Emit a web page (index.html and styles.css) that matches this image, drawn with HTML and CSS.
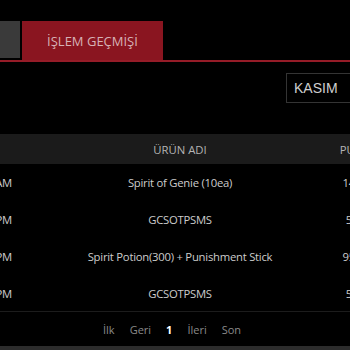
FILE: index.html
```html
<!DOCTYPE html>
<html lang="tr">
<head>
<meta charset="utf-8">
<link rel="stylesheet" href="styles.css">
</head>
<body>
<div class="screen">
  <div class="tabs">
    <div class="tab tab-gray"></div>
    <div class="tab tab-active">İŞLEM GEÇMİŞİ</div>
  </div>
  <div class="filter">
    <div class="select">KASIM</div>
  </div>
  <div class="table">
    <div class="row head">
      <div class="c-date head-date">TARİH</div>
      <div class="c-name">ÜRÜN ADI</div>
      <div class="c-pts">PUAN</div>
    </div>
    <div class="row">
      <div class="c-date">11/14/2023 9:45:12 AM</div>
      <div class="c-name">Spirit of Genie (10ea)</div>
      <div class="c-pts">1400</div>
    </div>
    <div class="row">
      <div class="c-date">11/12/2023 8:21:40 PM</div>
      <div class="c-name">GCSOTPSMS</div>
      <div class="c-pts">500</div>
    </div>
    <div class="row">
      <div class="c-date">11/09/2023 7:02:18 PM</div>
      <div class="c-name">Spirit Potion(300) + Punishment Stick</div>
      <div class="c-pts">9500</div>
    </div>
    <div class="row last">
      <div class="c-date">11/03/2023 6:33:51 PM</div>
      <div class="c-name">GCSOTPSMS</div>
      <div class="c-pts">500</div>
    </div>
  </div>
  <div class="pager">
    <span class="pg">İlk</span>
    <span class="pg">Geri</span>
    <span class="pg current">1</span>
    <span class="pg">İleri</span>
    <span class="pg">Son</span>
  </div>
  <div class="footer"></div>
</div>
</body>
</html>
```
FILE: styles.css
```css
html, body {
  margin: 0;
  padding: 0;
  background: #000;
}
body {
  width: 350px;
  height: 350px;
  overflow: hidden;
  font-family: "Open Sans", "Liberation Sans", sans-serif;
}
.screen {
  width: 350px;
  height: 350px;
  overflow: hidden;
  display: flex;
  flex-direction: column;
}
.tabs {
  display: flex;
  align-items: flex-start;
  gap: 2px;
  padding-top: 21px;
  border-bottom: 2px solid #961c28;
}
.tab {
  font-size: 13px;
  display: flex;
  align-items: center;
  justify-content: center;
  white-space: nowrap;
}
.tab-gray {
  width: 20px;
  height: 37px;
  background: #3a3a3a;
}
.tab-active {
  width: 141px;
  height: 39px;
  background: #8a1520;
  color: #d6b1b5;
}
.filter {
  padding: 11px 0 0 286px;
}
.select {
  width: 110px;
  height: 28px;
  border: 1px solid #343434;
  color: #cfcfcf;
  font-family: "Liberation Sans", Arial, sans-serif;
  font-size: 14px;
  line-height: 28px;
  padding-left: 7px;
  white-space: nowrap;
}
.table {
  margin-top: 31px;
  margin-left: -160px;
  width: 550px;
}
.row {
  display: grid;
  grid-template-columns: 200px 280px 70px;
  height: 37px;
  align-items: center;
  font-size: 11.3px;
  letter-spacing: -0.25px;
  color: #cccccc;
}
.row.head {
  height: 30px;
  background: #1b1b1b;
  color: #b4b4b4;
  letter-spacing: 0;
}
.row.last {
  border-bottom: 1px solid #1c1c1c;
  height: 36px;
}
.c-date {
  display: flex;
  justify-content: flex-end;
  padding-right: 28px;
  white-space: nowrap;
}
.c-date.head-date {
  justify-content: center;
  padding-right: 0;
}
.c-name {
  text-align: center;
  white-space: nowrap;
}
.c-pts {
  text-align: center;
  white-space: nowrap;
}
.pager {
  height: 34px;
  display: flex;
  align-items: center;
  gap: 15px;
  padding-left: 103px;
  font-size: 11px;
  color: #8a8a8a;
}
.pg.current {
  color: #fff;
  font-weight: bold;
}
.footer {
  flex: 1;
  background: #2c2c2c;
}
```
